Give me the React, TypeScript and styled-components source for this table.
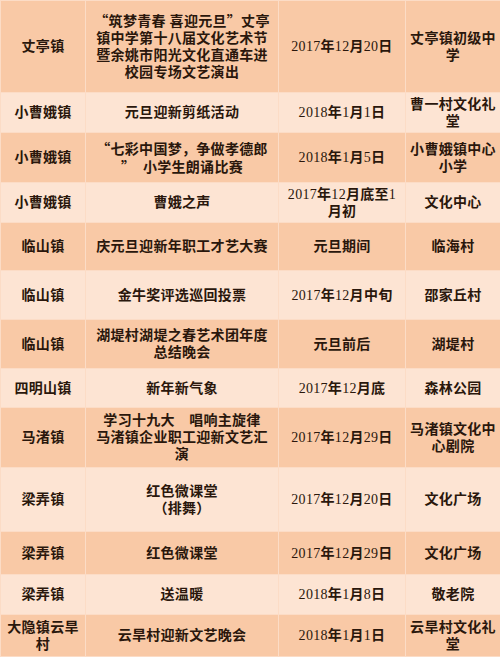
import React from "react";
import styled, { createGlobalStyle } from "styled-components";

const GlobalStyle = createGlobalStyle`
  html, body {
    margin: 0;
    padding: 0;
    background: #fde4d3;
  }
`;

const StyledTable = styled.table`
  width: 500px;
  table-layout: fixed;
  border-collapse: collapse;
  font-family: "Liberation Serif", "Noto Sans CJK SC", serif;
  font-size: 14px;
  line-height: 17px;
  letter-spacing: 0.3px;
  color: #2a170c;
`;

const TableRow = styled.tr<{ $dark: boolean; $h: number }>`
  height: ${(p) => p.$h}px;
  background: ${(p) => (p.$dark ? "#f9c9a6" : "#fde4d3")};
`;

const TableCell = styled.td`
  border: 1.5px solid #fcdcc6;
  padding: 0 3px;
  text-align: center;
  vertical-align: middle;
  font-weight: 600;
`;

const Digits = styled.span`
  font-weight: 400;
`;

const Quote = styled.span`
  font-family: "Noto Sans CJK SC", sans-serif;
`;

const columns = [85, 193, 127, 95];

type Row = { town: string; title: React.ReactNode; date: string; place: string; h: number };

const rows: Row[] = [
  {
    town: "丈亭镇",
    title: (
      <>
        <Quote>“</Quote>筑梦青春 喜迎元旦<Quote>”</Quote>丈亭
        <br />镇中学第十八届文化艺术节
        <br />暨余姚市阳光文化直通车进
        <br />校园专场文艺演出
      </>
    ),
    date: "2017年12月20日",
    place: "丈亭镇初级中学",
    h: 92,
  },
  { town: "小曹娥镇", title: "元旦迎新剪纸活动", date: "2018年1月1日", place: "曹一村文化礼堂", h: 40 },
  {
    town: "小曹娥镇",
    title: (
      <>
        <Quote>“</Quote>七彩中国梦，争做孝德郎
        <br />
        <Quote>”</Quote>&nbsp; 小学生朗诵比赛
      </>
    ),
    date: "2018年1月5日",
    place: "小曹娥镇中心小学",
    h: 50,
  },
  { town: "小曹娥镇", title: "曹娥之声", date: "2017年12月底至1月初", place: "文化中心", h: 40 },
  { town: "临山镇", title: "庆元旦迎新年职工才艺大赛", date: "元旦期间", place: "临海村", h: 48 },
  { town: "临山镇", title: "金牛奖评选巡回投票", date: "2017年12月中旬", place: "邵家丘村", h: 49 },
  {
    town: "临山镇",
    title: (
      <>
        湖堤村湖堤之春艺术团年度
        <br />总结晚会
      </>
    ),
    date: "元旦前后",
    place: "湖堤村",
    h: 49,
  },
  { town: "四明山镇", title: "新年新气象", date: "2017年12月底", place: "森林公园", h: 39 },
  {
    town: "马渚镇",
    title: (
      <>
        学习十九大　唱响主旋律
        <br />马渚镇企业职工迎新文艺汇
        <br />演
      </>
    ),
    date: "2017年12月29日",
    place: "马渚镇文化中心剧院",
    h: 60,
  },
  {
    town: "梁弄镇",
    title: (
      <>
        红色微课堂
        <br />（排舞）
      </>
    ),
    date: "2017年12月20日",
    place: "文化广场",
    h: 64,
  },
  { town: "梁弄镇", title: "红色微课堂", date: "2017年12月29日", place: "文化广场", h: 43 },
  { town: "梁弄镇", title: "送温暖", date: "2018年1月8日", place: "敬老院", h: 40 },
  { town: "大隐镇云旱村", title: "云旱村迎新文艺晚会", date: "2018年1月1日", place: "云旱村文化礼堂", h: 42 },
];

// keep the Latin digits at regular weight, like the reference's Times-style numerals
const renderDate = (s: string) =>
  s.split(/(\d+)/).map((part, i) =>
    /^\d+$/.test(part) ? <Digits key={i}>{part}</Digits> : <React.Fragment key={i}>{part}</React.Fragment>
  );

const App = () => {
  return (
    <>
      <GlobalStyle />
      <StyledTable>
        <colgroup>
          {columns.map((w, i) => (
            <col key={i} style={{ width: w }} />
          ))}
        </colgroup>
        <tbody>
          {rows.map((row, i) => (
            <TableRow key={i} $dark={i % 2 === 0} $h={row.h}>
              <TableCell>{row.town}</TableCell>
              <TableCell>{row.title}</TableCell>
              <TableCell>{renderDate(row.date)}</TableCell>
              <TableCell>{row.place}</TableCell>
            </TableRow>
          ))}
        </tbody>
      </StyledTable>
    </>
  );
};

export default App;
